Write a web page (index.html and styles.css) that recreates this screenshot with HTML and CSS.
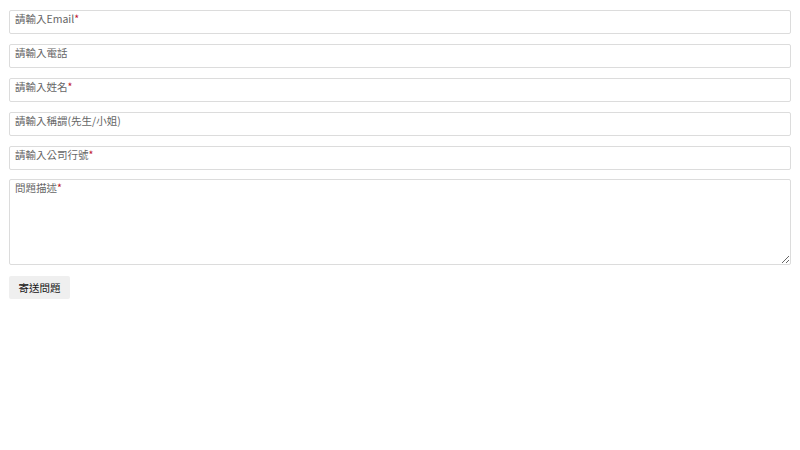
FILE: index.html
```html
<!DOCTYPE html>
<html>
<head>
<meta charset="utf-8">
<link rel="stylesheet" href="styles.css">
</head>
<body>
<form class="form">
  <div class="field"><input class="input" type="text"><span class="ph">請輸入Email<b class="req">*</b></span></div>
  <div class="field"><input class="input" type="text"><span class="ph">請輸入電話</span></div>
  <div class="field"><input class="input" type="text"><span class="ph">請輸入姓名<b class="req">*</b></span></div>
  <div class="field"><input class="input" type="text"><span class="ph">請輸入稱謂(先生/小姐)</span></div>
  <div class="field"><input class="input" type="text"><span class="ph">請輸入公司行號<b class="req">*</b></span></div>
  <div class="field field-area"><textarea class="area"></textarea><span class="ph">問題描述<b class="req">*</b></span></div>
  <button class="btn" type="button">寄送問題</button>
</form>
</body>
</html>
```
FILE: styles.css
```css
html, body { margin: 0; padding: 0; background: #fff; }
body { font-family: "Noto Sans CJK TC", "Noto Sans", sans-serif; }
.form { display: flex; flex-direction: column; align-items: flex-start; gap: 10px; padding: 10px 9px 0 9px; }
.field { position: relative; width: 782px; }
.field-area { margin-top: -1px; }
.input, .area {
  display: block; box-sizing: border-box; width: 100%;
  border: 1px solid #dcdcdc; border-radius: 2px; background: #fff;
  margin: 0; padding: 0 6px; font: inherit; outline: none;
}
.input { height: 24px; }
.area { height: 86px; resize: vertical; }
.ph {
  position: absolute; left: 6px; top: 2px;
  font-size: 10.5px; line-height: 14px; color: #666; pointer-events: none;
}
.req { color: #c0182e; font-weight: normal; }
.btn {
  margin-top: 1px; width: 61px; height: 23px; border: none; border-radius: 2px;
  background: #efefef; color: #111; font: inherit; font-size: 10.5px; padding: 0; cursor: pointer;
}
```
